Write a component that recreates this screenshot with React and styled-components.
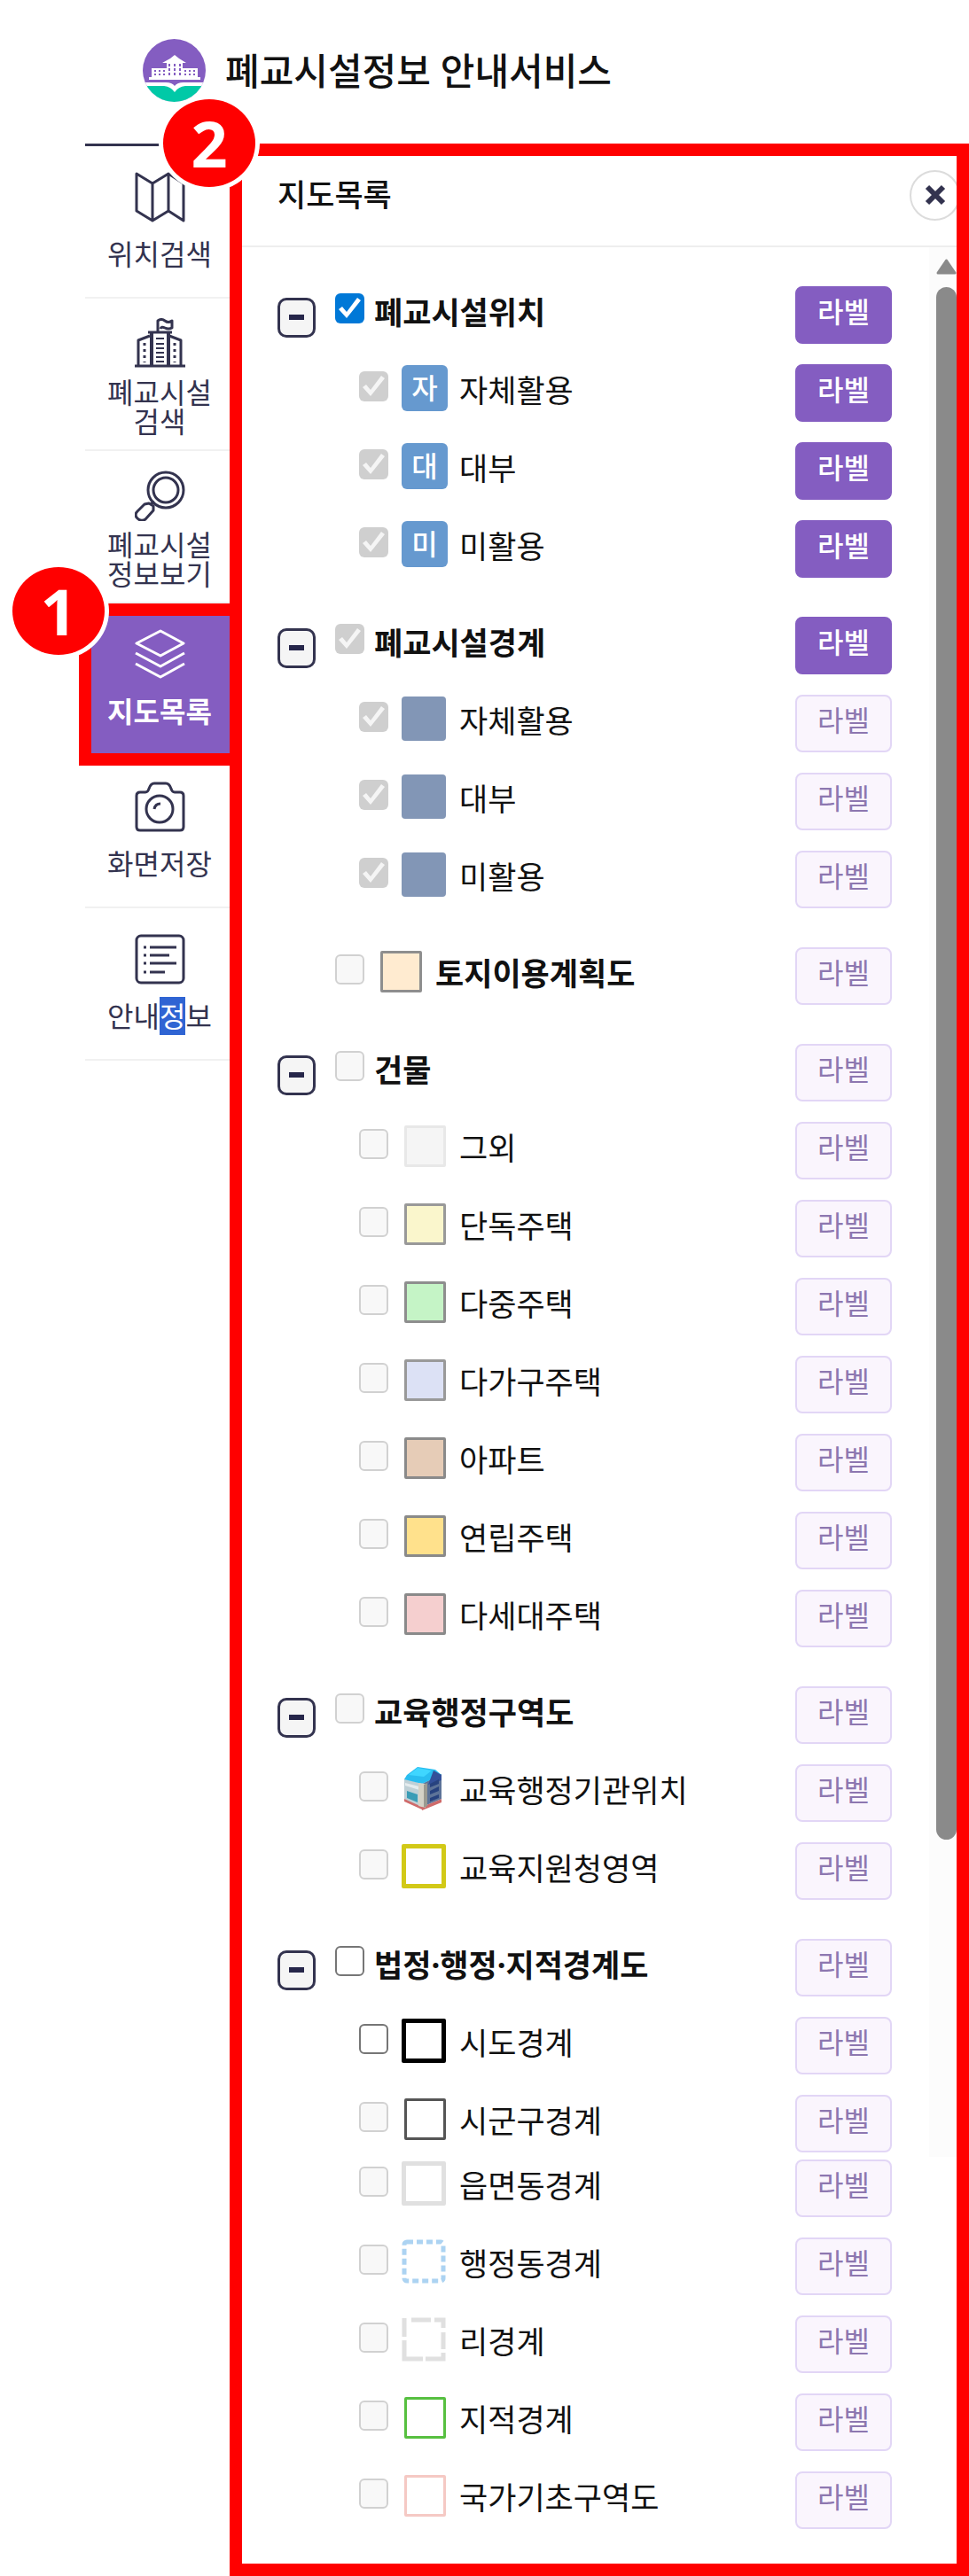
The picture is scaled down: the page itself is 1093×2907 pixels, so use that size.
import React from 'react';
import styled, { createGlobalStyle, css } from 'styled-components';

const INK = '#33334f';
const PURPLE = '#845dc1';
const RED = '#ff0000';

const SECTIONS = [
	{
		id: 'location',
		title: '폐교시설위치',
		checked: true,
		active: true,
		items: [
			{ name: '자체활용', checked: true, disabled: true, active: true, mark: '자' },
			{ name: '대부', checked: true, disabled: true, active: true, mark: '대' },
			{ name: '미활용', checked: true, disabled: true, active: true, mark: '미' },
		],
	},
	{
		id: 'boundary',
		title: '폐교시설경계',
		checked: true,
		disabled: true,
		active: true,
		items: [
			{ name: '자체활용', checked: true, disabled: true, block: '#8296b6' },
			{ name: '대부', checked: true, disabled: true, block: '#8296b6' },
			{ name: '미활용', checked: true, disabled: true, block: '#8296b6' },
		],
	},
	{
		id: 'landuse',
		title: '토지이용계획도',
		disabled: true,
		fill: '#ffebd0',
		line: '#8e8e8e',
		items: [],
	},
	{
		id: 'building',
		title: '건물',
		disabled: true,
		items: [
			{ name: '그외', disabled: true, fill: '#f5f5f5', line: '#e8e8e8' },
			{ name: '단독주택', disabled: true, fill: '#faf6cc', line: '#999999' },
			{ name: '다중주택', disabled: true, fill: '#c5f4c6', line: '#8e8e8e' },
			{ name: '다가구주택', disabled: true, fill: '#dce1f5', line: '#999999' },
			{ name: '아파트', disabled: true, fill: '#e6ccb7', line: '#8a8a8a' },
			{ name: '연립주택', disabled: true, fill: '#ffe18c', line: '#8a8a8a' },
			{ name: '다세대주택', disabled: true, fill: '#f5cfcf', line: '#8a8a8a' },
		],
	},
	{
		id: 'education',
		title: '교육행정구역도',
		disabled: true,
		items: [
			{ name: '교육행정기관위치', disabled: true, office: true },
			{ name: '교육지원청영역', disabled: true, line: '#d2c917', thick: true },
		],
	},
	{
		id: 'district',
		title: '법정·행정·지적경계도',
		items: [
			{ name: '시도경계', line: '#000000', thick: true },
			{ name: '시군구경계', disabled: true, line: '#555555' },
			{ name: '읍면동경계', disabled: true, line: '#e0e0e0', thick: true, tight: true },
			{ name: '행정동경계', disabled: true, dash: 'short' },
			{ name: '리경계', disabled: true, dash: 'long' },
			{ name: '지적경계', disabled: true, line: '#57c040' },
			{ name: '국가기초구역도', disabled: true, line: '#f5c9c4' },
		],
	},
];

const Logo = () => (
	<svg width="71" height="71" viewBox="0 0 71 71" aria-hidden="true">
		<clipPath id="logo-disc">
			<circle cx="35.5" cy="35.5" r="35.5" />
		</clipPath>
		<g clipPath="url(#logo-disc)">
			<rect width="71" height="71" fill={PURPLE} />
			<path d="M0 49h26q7 0 10 4q3-4 10-4h25v22H0z" fill="#fff" />
			<path d="M0 53h24q8 1 12 7q4-6 12-7h23v18H0z" fill="#00c9a7" />
		</g>
		<path d="M7 43h58v3H7zM10 33h17v11H10zM45 33h17v11H45zM27 27h18v17H27zM22 27l9-5l5-4l5 4l8 5z" fill="#fff" />
		<g fill={PURPLE}>
			<path d="M13 35h2v2h-2zM18 35h2v2h-2zM23 35h2v2h-2zM13 39h2v2h-2zM18 39h2v2h-2zM23 39h2v2h-2z" />
			<path d="M47 35h2v2h-2zM52 35h2v2h-2zM57 35h2v2h-2zM47 39h2v2h-2zM52 39h2v2h-2zM57 39h2v2h-2z" />
			<path d="M29 28h2v3h-2zM35 28h2v3h-2zM41 28h2v3h-2zM29 33h2v3h-2zM35 33h2v3h-2zM41 33h2v3h-2zM29 38h2v3h-2zM35 38h2v3h-2zM41 38h2v3h-2z" />
		</g>
	</svg>
);

const MapIcon = () => (
	<Glyph viewBox="0 0 57 57">
		<path d="M2 2l18 11L38 2l17 11v42L38 44L20 55L2 44zM20 13v42M38 2v42" />
	</Glyph>
);

const SchoolIcon = () => (
	<Glyph viewBox="0 0 57 57">
		<path d="M0 54h57M4 54V25l13-5M52 54V25l-13-5M15 16h27" />
		<path d="M19 54V17M38 54V17" strokeWidth="4" />
		<path d="M26 16V3q4-3 8 0t8 0v8q-4 2-8 0t-5 1" />
		<path d="M24 23h9M24 29h9M24 34h9M24 39h9M24 44h9M24 49h9" strokeWidth="2" />
		<path d="M11 28v22M45 28v22" strokeDasharray="3 4" />
	</Glyph>
);

const SearchIcon = () => (
	<Glyph viewBox="0 0 57 57">
		<circle cx="35" cy="22" r="20" />
		<circle cx="35" cy="22" r="14" />
		<path d="M11 38L3 46q-4 4 0 8t9 1l9-10v-5l-5-3zM18 38l4-3" />
	</Glyph>
);

const LayersIcon = () => (
	<Glyph viewBox="0 0 57 57">
		<path d="M29 2l26 14l-26 14L2 16zM1 27l28 15l27-15M1 39l28 15l27-15" />
	</Glyph>
);

const CameraIcon = () => (
	<Glyph viewBox="0 0 57 57">
		<path d="M6 12h6q3 0 4-4q2-6 6-6h13q4 0 6 6q1 4 4 4h6q4 0 4 4v35q0 4-4 4H6q-4 0-4-4V16q0-4 4-4z" />
		<circle cx="28" cy="31" r="15" />
		<path d="M22 31q1-6 7-6" />
	</Glyph>
);

const InfoIcon = () => (
	<Glyph viewBox="0 0 57 57">
		<rect x="2" y="2" width="53" height="53" rx="5" />
		<path d="M10 15h3M10 24h3M10 33h3M10 43h3M17 15h30M17 24h22M17 33h30M17 43h17" />
	</Glyph>
);

const OfficeIcon = () => (
	<svg width="50" height="50" viewBox="0 0 50 50" aria-hidden="true">
		<path d="M3 36l20 9v4L3 40zM23 46l22-9v4l-22 9z" fill="#cf6b6b" />
		<path d="M3 14l20 6v26L3 37z" fill="#bfd0d6" />
		<path d="M23 20l22-11v28l-22 9z" fill="#5d7398" />
		<path d="M6 10L18 1l20 3l7 6l-22 10L3 15z" fill="#29bdf0" />
		<path d="M18 2l16 3l-9 7l-17-2z" fill="#3fd6ff" />
		<path d="M36 5l9 5v6l-15 5z" fill="#33509a" />
		<path d="M4 19l16 4v4L4 22z" fill="#e5ecee" />
		<path d="M6 28l12 4v9L6 36z" fill="#3b9db6" />
		<path d="M19 19l8 1v27l-8-2z" fill="#d5d2c6" />
		<path d="M25 21l4-2v26l-4 2z" fill="#9b9a91" />
		<path d="M32 20l10-5v5l-10 4zM32 28l10-5v5l-10 4zM32 36l10-4v4l-10 4z" fill="#27427f" />
	</svg>
);

const MENU = [
	{ icon: MapIcon, text: '위치검색' },
	{ icon: SchoolIcon, text: '폐교시설\n검색', double: true },
	{ icon: SearchIcon, text: '폐교시설\n정보보기', double: true },
	{ icon: LayersIcon, text: '지도목록', active: true, step: 1 },
	{ icon: CameraIcon, text: '화면저장' },
	{ icon: InfoIcon, text: '안내정보', picked: '정' },
];

const MenuText = ({ text, picked }) => {
	if (!picked) return text;
	const [before, after] = text.split(picked);
	return (
		<>
			{before}
			<Picked>{picked}</Picked>
			{after}
		</>
	);
};

const LayerSwatch = ({ layer }) => {
	if (layer.mark) return <MarkSwatch>{layer.mark}</MarkSwatch>;
	if (layer.block) return <BlockSwatch $fill={layer.block} />;
	if (layer.office) return <OfficeIcon />;
	if (layer.dash) {
		const short = layer.dash === 'short';
		return (
			<svg width="50" height="50" viewBox="0 0 50 50" fill="none" aria-hidden="true">
				{short ? (
					<rect x="3" y="3" width="44" height="44" rx="3" stroke="#acd3f2" strokeWidth="5" strokeDasharray="7 4" />
				) : (
					<path d="M3 1v21M3 26v21h21M27 47h20v-7M47 36V17M47 12V3H37M33 3H11" stroke="#e0e0e0" strokeWidth="5" />
				)}
			</svg>
		);
	}
	return <LineSwatch $fill={layer.fill} $line={layer.line} $thick={layer.thick} />;
};

const LayerRow = ({ id, layer, child }) => {
	const hasSwatch = child || layer.fill;
	return (
		<Row $child={child} $tight={layer.tight}>
			{!child && (hasSwatch ? <TogglePlace /> : <Toggle type="button" aria-label={`${layer.title} 접기`} />)}
			<Check id={id} type="checkbox" defaultChecked={layer.checked} disabled={layer.disabled} />
			{hasSwatch && (
				<SwatchPlace>
					<LayerSwatch layer={layer} />
				</SwatchPlace>
			)}
			<RowName htmlFor={id} $strong={!child} $wide={hasSwatch}>
				{child ? layer.name : layer.title}
			</RowName>
			<LabelButton type="button" $active={layer.active}>
				라벨
			</LabelButton>
		</Row>
	);
};

const App = () => (
	<>
		<GlobalStyle />
		<Header>
			<Logo />
			<SiteTitle>폐교시설정보 안내서비스</SiteTitle>
		</Header>
		<Body>
			<Nav>
				<Menu>
					{MENU.map(({ icon: Icon, text, double, active, step, picked }) => (
						<MenuItem key={text} $active={active}>
							<MenuLink href="#" $double={double} $active={active}>
								<Icon />
								<MenuLabel $double={double}>
									<MenuText text={text} picked={picked} />
								</MenuLabel>
							</MenuLink>
							{step && <MenuStep>{step}</MenuStep>}
						</MenuItem>
					))}
				</Menu>
			</Nav>
			<PanelArea>
				<Panel>
					<PanelHeader>
						<PanelTitle>지도목록</PanelTitle>
						<Close type="button" aria-label="닫기">
							<svg width="24" height="24" viewBox="0 0 24 24" fill="none" stroke={INK} strokeWidth="6">
								<path d="M3 3l18 18M21 3L3 21" />
							</svg>
						</Close>
					</PanelHeader>
					<PanelBody>
						<List>
							{SECTIONS.map(section => (
								<Section key={section.id}>
									<LayerRow id={section.id} layer={section} />
									{section.items.map((item, index) => (
										<LayerRow key={item.name} id={`${section.id}-${index}`} layer={item} child />
									))}
								</Section>
							))}
						</List>
						<Scroll aria-hidden="true">
							<svg width="23" height="18" viewBox="0 0 23 18">
								<path d="M11.500 2L21 16H2z" fill="#8a8a8a" stroke="#8a8a8a" strokeWidth="3" strokeLinejoin="round" />
							</svg>
							<Thumb />
						</Scroll>
					</PanelBody>
				</Panel>
				<PanelStep>2</PanelStep>
			</PanelArea>
		</Body>
	</>
);

const GlobalStyle = createGlobalStyle`
	* {
		box-sizing: border-box;
	}
	body {
		margin: 0;
		background-color: #fff;
		color: #111;
		font-family: 'Noto Sans', 'Noto Sans CJK KR', sans-serif;
	}
	button, input {
		margin: 0;
		font-family: inherit;
	}
`;

const Header = styled.header`
	display: flex;
	align-items: center;
	gap: 22px;
	height: 162px;
	padding: 0 24px 3px 161px;
`;

const SiteTitle = styled.h1`
	margin: 0;
	font-size: 42px;
	font-weight: 500;
	line-height: 56px;
`;

const Body = styled.div`
	display: flex;
	align-items: flex-start;
	padding-left: 96px;
`;

const Nav = styled.nav`
	flex: none;
	width: 163px;
	border-top: 3px solid ${INK};
`;

const Menu = styled.ul`
	margin: 0;
	padding: 0;
	list-style: none;
`;

const MenuItem = styled.li`
	position: relative;
	${({ $active }) =>
		$active &&
		css`
			/* callout frame around the selected menu */
			&::after {
				content: '';
				position: absolute;
				inset: 0 -14px -11px -7px;
				border: 14px solid ${RED};
				pointer-events: none;
			}
		`}
`;

const MenuLink = styled.a`
	display: flex;
	flex-direction: column;
	align-items: center;
	height: 172px;
	padding: ${({ $double }) => ($double ? '22px' : '29px')} 0 0 5px;
	border-bottom: 2px solid #f1f1f1;
	color: ${({ $active }) => ($active ? '#fff' : INK)};
	background-color: ${({ $active }) => ($active ? PURPLE : 'transparent')};
	font-weight: ${({ $active }) => ($active ? 700 : 400)};
	text-decoration: none;
`;

const MenuLabel = styled.span`
	margin-top: ${({ $double }) => ($double ? '10px' : '19px')};
	font-size: 32px;
	line-height: 33px;
	text-align: center;
	white-space: pre;
`;

const Picked = styled.span`
	color: #fff;
	background-color: #2f64d3;
`;

const Glyph = styled.svg.attrs({ 'aria-hidden': true })`
	flex: none;
	width: 57px;
	height: 57px;
	fill: none;
	stroke: currentColor;
	stroke-width: 3px;
	stroke-linejoin: round;
	path[stroke-width='2'] {
		stroke-width: 2px;
	}
	path[stroke-width='4'] {
		stroke-width: 4px;
	}
`;

const Step = styled.span`
	position: absolute;
	z-index: 2;
	display: flex;
	justify-content: center;
	align-items: center;
	width: 104px;
	height: 99px;
	border-radius: 50%;
	box-shadow: 0 0 0 5px #fff;
	color: #fff;
	background-color: ${RED};
	font-size: 72px;
	font-weight: 700;
	line-height: 99px;
`;

const MenuStep = styled(Step)`
	top: -41px;
	left: -82px;
`;

const PanelStep = styled(Step)`
	top: -50px;
	left: -75px;
`;

const PanelArea = styled.div`
	position: relative;
	flex: 1;
	min-width: 0;
`;

const Panel = styled.section`
	overflow: hidden;
	border: 14px solid ${RED};
`;

const PanelHeader = styled.header`
	display: flex;
	justify-content: space-between;
	align-items: center;
	height: 103px;
	padding: 0 0 13px 40px;
	border-bottom: 2px solid #eeeeee;
`;

const PanelTitle = styled.h2`
	margin: 0;
	font-size: 35px;
	font-weight: 500;
	line-height: 48px;
`;

const Close = styled.button`
	display: flex;
	justify-content: center;
	align-items: center;
	flex: none;
	width: 57px;
	height: 57px;
	margin-right: -4px;
	padding: 0;
	border: 2px solid #dcdcdc;
	border-radius: 50%;
	background-color: #fff;
`;

const PanelBody = styled.div`
	display: flex;
	align-items: flex-start;
`;

const List = styled.div`
	display: flex;
	flex: 1;
	flex-direction: column;
	gap: 44px;
	min-width: 0;
	padding: 44px 42px 39px 40px;
`;

const Section = styled.div`
	display: flex;
	flex-direction: column;
	gap: 23px;
`;

const Row = styled.div`
	display: flex;
	align-items: center;
	height: 65px;
	margin-top: ${({ $tight }) => ($tight ? '-15px' : 0)};
	padding-left: ${({ $child }) => ($child ? '92px' : 0)};
`;

const Toggle = styled.button`
	display: flex;
	justify-content: center;
	align-items: center;
	flex: none;
	width: 43px;
	height: 45px;
	margin: 5px 22px 0 0;
	padding: 0;
	border: 3px solid ${INK};
	border-radius: 10px;
	background-color: #f5f5f5;
	&::before {
		content: '';
		width: 17px;
		height: 6px;
		background-color: #26264a;
	}
`;

const TogglePlace = styled.span`
	flex: none;
	width: 65px;
`;

const Check = styled.input`
	appearance: none;
	flex: none;
	width: 33px;
	height: 34px;
	margin-bottom: 15px;
	border: 2px solid #767676;
	border-radius: 6px;
	background-color: #fff;
	&:disabled {
		border-color: #d1d1d1;
		background-color: #f8f8f8;
	}
	&:checked {
		border: none;
		background-color: #0078d7;
	}
	&:checked:disabled {
		background-color: #cfcfcf;
	}
	&:checked::before {
		content: '';
		display: block;
		height: 100%;
		background-color: #fff;
		clip-path: polygon(4px 18px, 8px 15px, 13px 21px, 25px 5px, 29px 8px, 13px 28px);
	}
	&:checked:disabled::before {
		background-color: #f5f5f5;
	}
`;

const SwatchPlace = styled.span`
	display: flex;
	align-items: center;
	flex: none;
	width: 52px;
	margin: 0 0 11px 15px;
`;

const MarkSwatch = styled.span`
	width: 52px;
	height: 52px;
	border-radius: 6px;
	color: #fff;
	background-color: #6699cf;
	font-size: 32px;
	font-weight: 500;
	line-height: 52px;
	text-align: center;
`;

const BlockSwatch = styled.span`
	width: 50px;
	height: 50px;
	border-radius: 4px;
	background-color: ${({ $fill }) => $fill};
`;

const LineSwatch = styled.span`
	width: ${({ $thick }) => ($thick ? '50px' : '47px')};
	height: ${({ $thick }) => ($thick ? '50px' : '47px')};
	margin-left: ${({ $thick }) => ($thick ? 0 : '3px')};
	border: ${({ $thick }) => ($thick ? '5px' : '3px')} solid ${({ $line }) => $line};
	border-radius: 2px;
	background-color: ${({ $fill }) => $fill || '#fff'};
`;

const RowName = styled.label`
	flex: 1;
	min-width: 0;
	padding: 0 0 5px ${({ $wide }) => ($wide ? '13px' : '11px')};
	font-size: 35px;
	font-weight: ${({ $strong }) => ($strong ? 700 : 400)};
	line-height: 48px;
	white-space: nowrap;
`;

const LabelButton = styled.button`
	flex: none;
	width: 109px;
	height: 65px;
	padding: 0 0 8px;
	border: 2px solid ${({ $active }) => ($active ? PURPLE : '#e2d6f6')};
	border-radius: 8px;
	color: ${({ $active }) => ($active ? '#fff' : '#8d77b0')};
	background-color: ${({ $active }) => ($active ? PURPLE : '#faf5fd')};
	font-size: 32px;
	font-weight: ${({ $active }) => ($active ? 500 : 400)};
	line-height: 48px;
`;

const Scroll = styled.div`
	display: flex;
	flex: none;
	flex-direction: column;
	gap: 14px;
	width: 31px;
	height: 2155px;
	padding: 13px 0 0 8px;
	background-color: #fcfcfc;
`;

const Thumb = styled.div`
	width: 23px;
	height: 1752px;
	border-radius: 12px;
	background-color: #8a8a8a;
`;

export default App;
